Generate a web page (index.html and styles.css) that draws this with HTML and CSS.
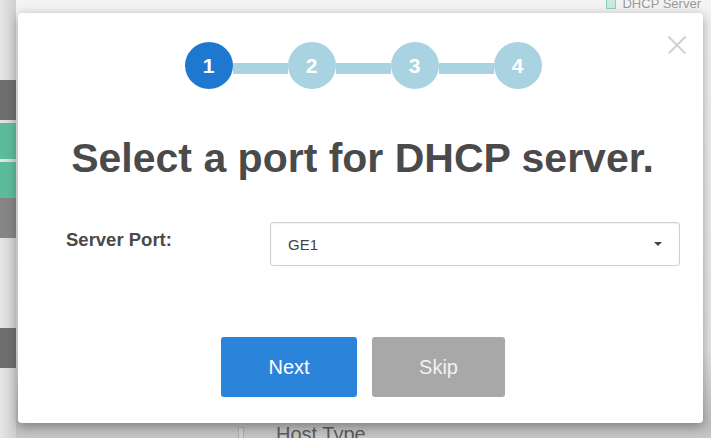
FILE: index.html
```html
<!DOCTYPE html>
<html lang="en">
<head>
    <meta charset="UTF-8">
    <title>DHCP Server Wizard</title>
    <link rel="stylesheet" href="styles.css">
</head>
<body>
    <div class="page">
        <div class="side-strip">
            <div class="tab tab-dark" style="margin-top: 80px;"></div>
            <div class="tab tab-green"></div>
            <div class="tab tab-green"></div>
            <div class="tab tab-gray"></div>
            <div class="tab tab-dark" style="margin-top: 90px;"></div>
        </div>
        <div class="page-main">
            <div class="page-top">
                <span class="check"></span>
                <span>DHCP Server</span>
            </div>
            <div class="page-bottom">
                <span class="check"></span>
                <span class="host">Host Type</span>
            </div>
        </div>
    </div>

    <div class="modal">
        <div class="close"></div>

        <div class="stepper">
            <div class="step active">1</div>
            <div class="line"></div>
            <div class="step">2</div>
            <div class="line"></div>
            <div class="step">3</div>
            <div class="line"></div>
            <div class="step">4</div>
        </div>

        <h1>Select a port for DHCP server.</h1>

        <div class="form-row">
            <label for="port">Server Port:</label>
            <div class="select">
                <span>GE1</span>
                <span class="caret"></span>
            </div>
        </div>

        <div class="actions">
            <button class="btn btn-next">Next</button>
            <button class="btn btn-skip">Skip</button>
        </div>
    </div>
</body>
</html>
```

FILE: styles.css
```css
* {
    box-sizing: border-box;
    margin: 0;
    padding: 0;
}
body {
    font-family: "Liberation Sans", Arial, sans-serif;
    width: 711px;
    height: 438px;
    overflow: hidden;
    background: #e9e9e9;
    color: #4d4d4d;
    position: relative;
}
.page {
    display: flex;
    height: 438px;
    background: linear-gradient(#f4f4f4 0, #e4e4e4 80%, #bdbdbd 97%, #c6c6c6 100%);
}
.side-strip {
    width: 16px;
    display: flex;
    flex-direction: column;
    background: linear-gradient(90deg, #e6e6e6, #cfcfcf);
}
.tab {
    height: 40px;
}
.tab-dark {
    background: #6f6f6f;
}
.tab-green {
    background: #5dbb9b;
    margin-top: 3px;
    height: 36px;
}
.tab-gray {
    background: #858585;
}
.page-main {
    flex: 1;
    display: flex;
    flex-direction: column;
    justify-content: space-between;
}
.page-top {
    align-self: flex-end;
    display: flex;
    align-items: center;
    gap: 6px;
    margin-top: -4px;
    margin-right: 10px;
    font-size: 13px;
    color: #9a9a9a;
}
.check {
    display: inline-block;
    width: 10px;
    height: 10px;
    border: 1px solid #8fd0b8;
    background: #c8ebde;
}
.page-bottom {
    display: flex;
    align-items: center;
    gap: 32px;
    margin-left: 222px;
    margin-bottom: -8px;
    font-size: 20px;
    color: #5a5a5a;
}
.page-bottom .check {
    border-color: #aaa;
    background: #ccc;
    width: 6px;
    height: 16px;
}

.modal {
    position: absolute;
    left: 18px;
    top: 13px;
    width: 685px;
    height: 410px;
    background: #fff;
    border-radius: 4px;
    box-shadow: 0 3px 12px rgba(0, 0, 0, 0.35);
    padding: 29px 0 0 0;
    display: flex;
    flex-direction: column;
    align-items: center;
}
.close {
    position: absolute;
    right: 17px;
    top: 23px;
    width: 18px;
    height: 18px;
}
.close::before,
.close::after {
    content: "";
    position: absolute;
    left: -3px;
    top: 8px;
    width: 24px;
    height: 1.5px;
    background: #cfcfcf;
    transform: rotate(45deg);
}
.close::after {
    transform: rotate(-45deg);
}

.stepper {
    display: flex;
    align-items: center;
    margin-left: 5px;
}
.step {
    width: 48px;
    height: 47px;
    border-radius: 50%;
    background: #a9d3e1;
    color: #fff;
    font-size: 21px;
    font-weight: bold;
    display: flex;
    align-items: center;
    justify-content: center;
}
.step.active {
    background: #1f78cf;
}
.line {
    width: 55px;
    height: 11px;
    margin-top: 5px;
    background: #a9d3e1;
}

h1 {
    margin-top: 46px;
    font-size: 41px;
    line-height: 47px;
    font-weight: bold;
    color: #4a4a4a;
    margin-left: 4px;
}

.form-row {
    align-self: stretch;
    display: flex;
    align-items: center;
    margin-top: 40px;
    padding-left: 48px;
}
label {
    width: 204px;
    font-size: 18.5px;
    font-weight: bold;
    color: #4a4a4a;
    margin-top: -8px;
}
.select {
    width: 410px;
    height: 44px;
    border: 1px solid #d0d0d0;
    border-radius: 3px;
    box-shadow: inset 0 1px 2px rgba(0, 0, 0, 0.06);
    display: flex;
    align-items: center;
    justify-content: space-between;
    padding: 0 17px 0 17px;
    font-size: 15px;
    color: #444;
}
.caret {
    width: 0;
    height: 0;
    border-left: 4px solid transparent;
    border-right: 4px solid transparent;
    border-top: 4px solid #444;
}

.actions {
    display: flex;
    gap: 15px;
    margin-top: 71px;
    margin-left: 5px;
}
.btn {
    height: 60px;
    border: none;
    border-radius: 3px;
    font-family: inherit;
    font-size: 20px;
    color: #fff;
}
.btn-next {
    width: 136px;
    background: #2b84d9;
}
.btn-skip {
    width: 133px;
    background: #a8a8a8;
    color: #f2f2f2;
}
```
